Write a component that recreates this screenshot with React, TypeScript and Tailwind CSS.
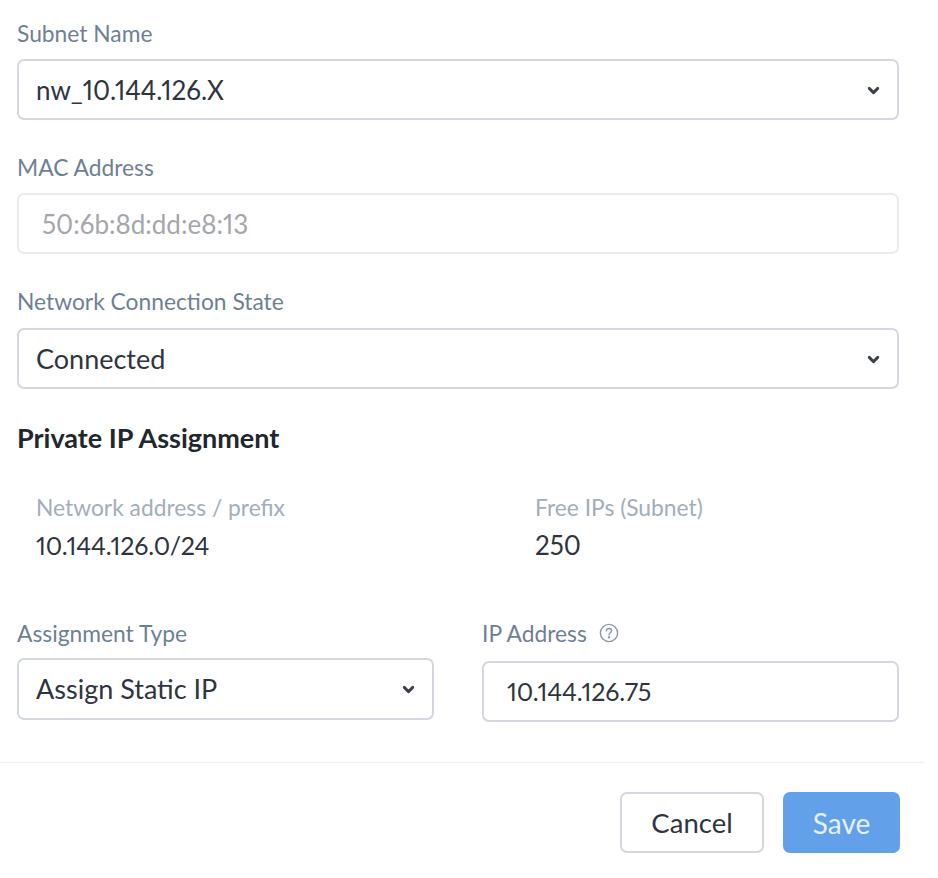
import { ChevronDown } from 'lucide-react'

function Label({ children }: { children: React.ReactNode }) {
  return <p className="h-[26px] text-[22.8px] leading-[26px] text-[#6f7f96]">{children}</p>
}

function SelectBox({ value, numeric, tall }: { value: string; numeric?: boolean; tall?: boolean }) {
  return (
    <div
      className={`flex items-center justify-between rounded-[7px] border-2 border-[#d3d7e0] pl-[17px] pr-[15px] pt-[1px] ${
        tall ? 'h-[62px]' : 'h-[61px]'
      }`}
    >
      <span className={numeric ? 'text-[26px] text-[#2f3540] proportional-nums' : 'text-[27px] text-[#2f3540]'}>
        {value}
      </span>
      <ChevronDown size={17} strokeWidth={4} className="text-[#3a3f4a]" />
    </div>
  )
}

export default function App() {
  return (
    <div className="h-[878px] w-[938px] bg-white font-['Lato',sans-serif]">
      <div className="w-[925px]">
        <div className="pl-[17px] pr-[26px] pt-[20px]">
          <Label>Subnet Name</Label>
          <div className="mt-[13px]">
            <SelectBox value="nw_10.144.126.X" numeric />
          </div>

          <div className="mt-[34px]">
            <Label>MAC Address</Label>
          </div>
          <div className="mt-[13px] flex h-[61px] items-center rounded-[7px] border-2 border-[#e9ebef] pl-[23px] pt-[1px]">
            <span className="text-[26px] text-[#a4a7ac] proportional-nums">50:6b:8d:dd:e8:13</span>
          </div>

          <div className="mt-[34px]">
            <Label>Network Connection State</Label>
          </div>
          <div className="mt-[14px]">
            <SelectBox value="Connected" />
          </div>

          <h2 className="mt-[34px] h-[30px] text-[27px] font-bold leading-[30px] text-[#22272f]">
            Private IP Assignment
          </h2>

          <div className="mt-[41px] flex pl-[19px]">
            <div className="w-[499px]">
              <p className="h-[26px] text-[22.8px] leading-[26px] text-[#a3adbb]">Network address / prefix</p>
              <p className="mt-[10px] text-[25px] leading-[30px] tracking-[-0.15px] text-[#2f3540] proportional-nums">10.144.126.0/24</p>
            </div>
            <div>
              <p className="h-[26px] text-[22.8px] leading-[26px] text-[#a3adbb]">Free IPs (Subnet)</p>
              <p className="mt-[10px] text-[26px] leading-[30px] text-[#2f3540] proportional-nums">250</p>
            </div>
          </div>

          <div className="mt-[60px] grid grid-cols-[417px_417px] gap-x-[48px]">
            <div>
              <Label>Assignment Type</Label>
              <div className="mt-[12px]">
                <SelectBox value="Assign Static IP" tall />
              </div>
            </div>
            <div>
              <div className="flex items-center gap-[12px]">
                <Label>IP Address</Label>
                <svg width="20" height="20" viewBox="0 0 20 20" fill="none" stroke="#8d99aa" strokeWidth="1.4">
                  <circle cx="10" cy="10" r="8.6" />
                  <path d="M7.4 8c0-1.5 1.1-2.5 2.6-2.5s2.6 1 2.6 2.3c0 1.9-2.6 2-2.6 3.9" strokeLinecap="round" />
                  <circle cx="10" cy="14.3" r="0.5" fill="#8d99aa" />
                </svg>
              </div>
              <div className="mt-[15px] flex h-[61px] items-center rounded-[7px] border-2 border-[#d3d7e0] pl-[23px] pt-[1px]">
                <span className="text-[25px] tracking-[-0.15px] text-[#2f3540] proportional-nums">10.144.126.75</span>
              </div>
            </div>
          </div>
        </div>

        <div className="mt-[40px] border-t border-[#f0f1f3] pl-[620px] pt-[29px]">
          <div className="flex gap-[19px]">
            <button className="h-[61px] w-[144px] rounded-[7px] border-2 border-[#d3d7e0] bg-white text-[27.5px] text-[#2f3540]">
              Cancel
            </button>
            <button className="h-[61px] w-[117px] rounded-[7px] bg-[#62a0ea] text-[28px] text-[#e6f0fc]">
              Save
            </button>
          </div>
        </div>
      </div>
    </div>
  )
}
